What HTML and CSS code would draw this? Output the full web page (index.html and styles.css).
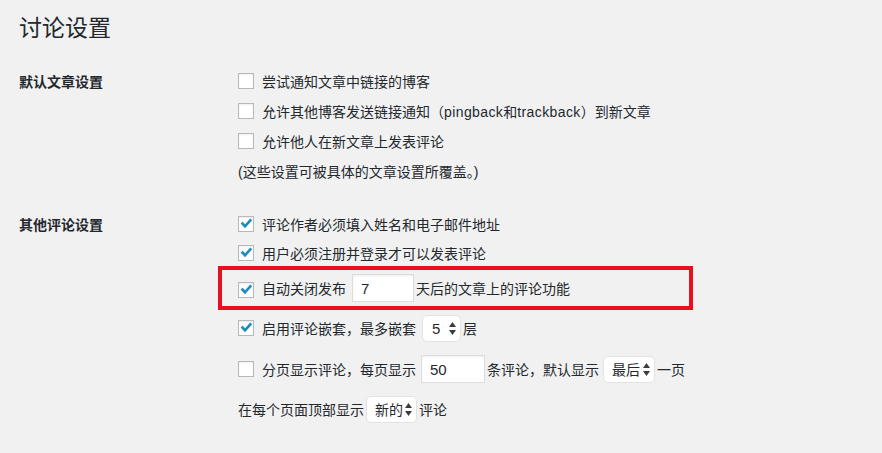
FILE: index.html
```html
<!DOCTYPE html>
<html lang="zh-CN">
<head>
<meta charset="utf-8">
<title>讨论设置</title>
<link rel="stylesheet" href="styles.css">
</head>
<body>
<div class="wrap">
  <h1 class="title">讨论设置</h1>

  <div class="form-row sec-default">
    <div class="th">默认文章设置</div>
    <div class="td">
      <label class="opt"><span class="cb"></span><span>尝试通知文章中链接的博客</span></label>
      <label class="opt"><span class="cb"></span><span>允许其他博客发送链接通知（<span class="latin">pingback</span>和<span class="latin">trackback</span>）到新文章</span></label>
      <label class="opt"><span class="cb"></span><span>允许他人在新文章上发表评论</span></label>
      <p class="opt desc">(这些设置可被具体的文章设置所覆盖。)</p>
    </div>
  </div>

  <div class="form-row sec-other">
    <div class="th">其他评论设置</div>
    <div class="td">
      <label class="opt"><span class="cb on"><svg viewBox="0 0 16 16" width="16" height="16"><polygon points="2.6,7.6 4.6,5.7 7,8.2 12.3,2.4 14.2,4.3 7,12.2" fill="#1e8cbe"/></svg></span><span>评论作者必须填入姓名和电子邮件地址</span></label>
      <label class="opt r2"><span class="cb on"><svg viewBox="0 0 16 16" width="16" height="16"><polygon points="2.6,7.6 4.6,5.7 7,8.2 12.3,2.4 14.2,4.3 7,12.2" fill="#1e8cbe"/></svg></span><span>用户必须注册并登录才可以发表评论</span></label>
      <div class="highlight">
        <label class="opt r3"><span class="cb on"><svg viewBox="0 0 16 16" width="16" height="16"><polygon points="2.6,7.6 4.6,5.7 7,8.2 12.3,2.4 14.2,4.3 7,12.2" fill="#1e8cbe"/></svg></span><span>自动关闭发布</span><input class="field num7" type="text" value="7"><span class="after">天后的文章上的评论功能</span></label>
      </div>
      <label class="opt r4"><span class="cb on"><svg viewBox="0 0 16 16" width="16" height="16"><polygon points="2.6,7.6 4.6,5.7 7,8.2 12.3,2.4 14.2,4.3 7,12.2" fill="#1e8cbe"/></svg></span><span>启用评论嵌套，最多嵌套</span><span class="select sel5">5<svg class="arr" viewBox="0 0 7 13" width="7" height="13"><polygon points="3.5,0 7,5 0,5" fill="#3c3c3c"/><polygon points="0,8 7,8 3.5,13" fill="#3c3c3c"/></svg></span><span class="after">层</span></label>
      <label class="opt r5"><span class="cb"></span><span>分页显示评论，每页显示</span><input class="field num50" type="text" value="50"><span class="after">条评论，默认显示</span><span class="select sel-last">最后<svg class="arr" viewBox="0 0 7 13" width="7" height="13"><polygon points="3.5,0 7,5 0,5" fill="#3c3c3c"/><polygon points="0,8 7,8 3.5,13" fill="#3c3c3c"/></svg></span><span class="after">一页</span></label>
      <div class="opt r6"><span>在每个页面顶部显示</span><span class="select sel-new">新的<svg class="arr" viewBox="0 0 7 13" width="7" height="13"><polygon points="3.5,0 7,5 0,5" fill="#3c3c3c"/><polygon points="0,8 7,8 3.5,13" fill="#3c3c3c"/></svg></span><span class="after">评论</span></div>
    </div>
  </div>
</div>
</body>
</html>
```

FILE: styles.css
```css
html, body {
  margin: 0;
  padding: 0;
  background: #f1f1f1;
}

body {
  font-family: "Liberation Sans", "Noto Sans CJK SC", sans-serif;
  font-size: 14px;
  color: #23282d;
}

.wrap {
  padding: 0 0 0 19px;
}

.title {
  margin: 0;
  padding-top: 14px;
  font-size: 23px;
  font-weight: 400;
  line-height: 29px;
  color: #23282d;
}

.form-row {
  display: grid;
  grid-template-columns: 219px 1fr;
}

.sec-default {
  margin-top: 23px;
}

.sec-other {
  margin-top: 23px;
}

.th {
  height: 30px;
  display: flex;
  align-items: center;
  font-weight: 700;
  font-size: 14px;
}

.td {
  display: flex;
  flex-direction: column;
}

.opt {
  display: flex;
  align-items: center;
  height: 30px;
  margin: 0;
  white-space: nowrap;
}

.latin {
  letter-spacing: 0.4px;
}

.desc {
  font-size: 14px;
}

.cb {
  width: 16px;
  height: 16px;
  box-sizing: border-box;
  border: 1px solid #b4b9be;
  background: #fff;
  box-shadow: inset 0 1px 2px rgba(0, 0, 0, 0.07);
  margin-right: 8px;
  flex: none;
  position: relative;
}

.cb svg {
  position: absolute;
  left: -1px;
  top: -1px;
}

.r2 {
  height: 27px;
}

.highlight {
  box-sizing: border-box;
  width: 475px;
  height: 44px;
  margin-left: -20px;
  padding-left: 16px;
  border: 4px solid #e8101e;
  display: flex;
  align-items: center;
}

.r3 {
  height: 36px;
}

.r3 .cb {
  margin-top: 3px;
}

.r4 {
  height: 36px;
}

.r5 {
  height: 46px;
}

.r6 {
  height: 34px;
}

.field {
  box-sizing: border-box;
  height: 28px;
  border: 1px solid #ddd;
  background: #fff;
  box-shadow: inset 0 1px 2px rgba(0, 0, 0, 0.07);
  font-family: "Liberation Sans", "Noto Sans CJK SC", sans-serif;
  font-size: 15px;
  color: #23282d;
  padding: 0 8px;
  outline: none;
  flex: none;
}

.num7 {
  width: 62px;
  margin-left: 6px;
}

.num50 {
  width: 64px;
  margin-left: 5px;
}

.after {
  margin-left: 2px;
}

.select {
  box-sizing: border-box;
  height: 27px;
  display: inline-flex;
  align-items: center;
  background: #fff;
  border: 1px solid #e2e2e2;
  border-radius: 5px;
  padding: 0 4px 0 9px;
  font-size: 14px;
  flex: none;
}

.select .arr {
  margin-left: auto;
}

.sel5 {
  width: 39px;
  margin-left: 6px;
  font-size: 15px;
}

.sel-last {
  width: 52px;
  margin-left: 4px;
  padding-left: 8px;
}

.sel-new {
  width: 51px;
  margin-left: 2px;
  padding-left: 8px;
}
```
